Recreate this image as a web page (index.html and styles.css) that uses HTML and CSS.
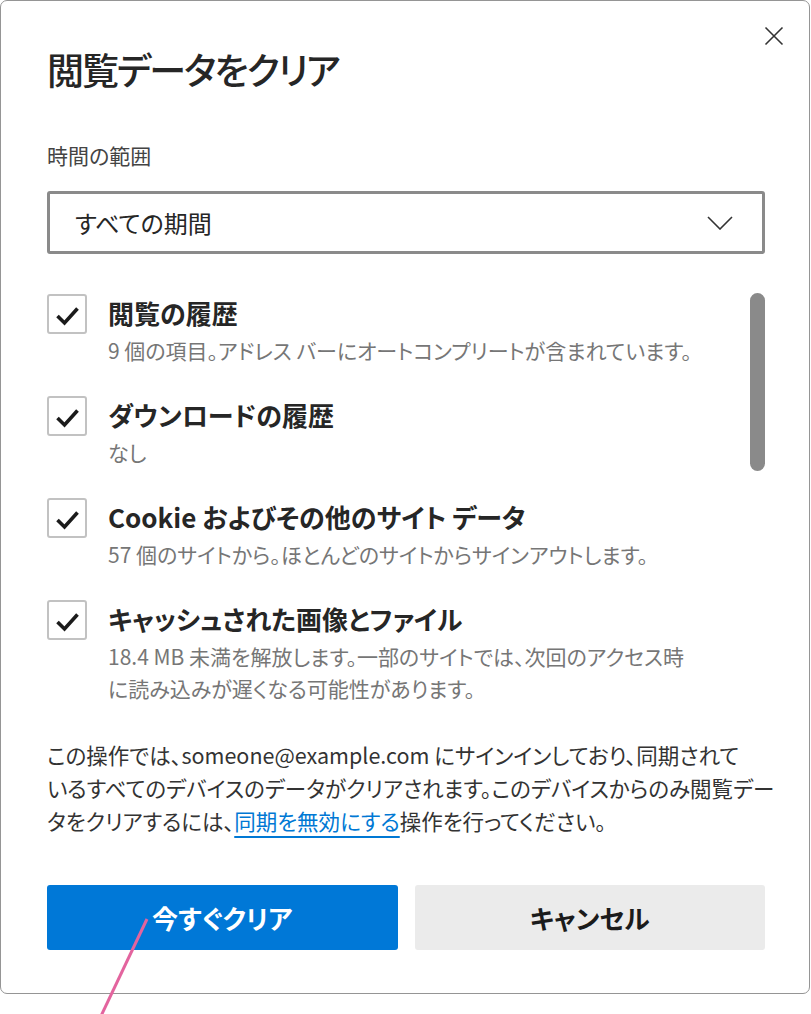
FILE: index.html
```html
<!DOCTYPE html>
<html lang="ja">
<head>
<meta charset="utf-8">
<title>閲覧データをクリア</title>
<link rel="stylesheet" href="styles.css">
</head>
<body>
<div class="dialog">
  <div class="header">
    <h1 class="title">閲覧データをクリア</h1>
    <button class="close" aria-label="閉じる">
      <svg viewBox="0 0 20 20" width="20" height="20"><path d="M1.5 1.5L18.5 18.5M18.5 1.5L1.5 18.5" fill="none" stroke="#333" stroke-width="1.6"/></svg>
    </button>
  </div>
  <div class="label">時間の範囲</div>
  <div class="select">
    <span>すべての期間</span>
    <svg class="chevron" viewBox="0 0 26 14" width="26" height="14"><path d="M1 1L13 13L25 1" fill="none" stroke="#333" stroke-width="1.6"/></svg>
  </div>
  <div class="list">
    <div class="items">
      <div class="item">
        <span class="check"><svg viewBox="0 0 36 36" width="36" height="36"><path d="M8.5 20L15.5 27L28.5 12.5" fill="none" stroke="#1b1b1b" stroke-width="3.6"/></svg></span>
        <div class="text">
          <div class="item-title">閲覧の履歴</div>
          <div class="item-sub">9 個の項目。アドレス バーにオートコンプリートが含まれています。</div>
        </div>
      </div>
      <div class="item">
        <span class="check"><svg viewBox="0 0 36 36" width="36" height="36"><path d="M8.5 20L15.5 27L28.5 12.5" fill="none" stroke="#1b1b1b" stroke-width="3.6"/></svg></span>
        <div class="text">
          <div class="item-title">ダウンロードの履歴</div>
          <div class="item-sub">なし</div>
        </div>
      </div>
      <div class="item">
        <span class="check"><svg viewBox="0 0 36 36" width="36" height="36"><path d="M8.5 20L15.5 27L28.5 12.5" fill="none" stroke="#1b1b1b" stroke-width="3.6"/></svg></span>
        <div class="text">
          <div class="item-title">Cookie およびその他のサイト データ</div>
          <div class="item-sub">57 個のサイトから。ほとんどのサイトからサインアウトします。</div>
        </div>
      </div>
      <div class="item">
        <span class="check"><svg viewBox="0 0 36 36" width="36" height="36"><path d="M8.5 20L15.5 27L28.5 12.5" fill="none" stroke="#1b1b1b" stroke-width="3.6"/></svg></span>
        <div class="text">
          <div class="item-title">キャッシュされた画像とファイル</div>
          <div class="item-sub">18.4 MB 未満を解放します。一部のサイトでは、次回のアクセス時<br>に読み込みが遅くなる可能性があります。</div>
        </div>
      </div>
    </div>
    <div class="track"><div class="thumb"></div></div>
  </div>
  <p class="notice">この操作では、someone@example.com にサインインしており、同期されて<br>いるすべてのデバイスのデータがクリアされます。このデバイスからのみ閲覧デー<br>タをクリアするには、<a class="link" href="#">同期を無効にする</a>操作を行ってください。</p>
  <div class="buttons">
    <button class="btn primary">今すぐクリア</button>
    <button class="btn secondary">キャンセル</button>
  </div>
</div>
<svg class="pointer" viewBox="0 0 811 1014" width="811" height="1014"><line x1="147" y1="919" x2="101" y2="1016" stroke="#e3649e" stroke-width="3"/></svg>
</body>
</html>
```

FILE: styles.css
```css
html, body {
  margin: 0;
  padding: 0;
  background: #ffffff;
}
body {
  width: 811px;
  height: 1014px;
  position: relative;
  overflow: hidden;
  font-family: "Noto Sans CJK JP", "Noto Sans", sans-serif;
  font-feature-settings: "palt";
  color: #2b2b2b;
}
.dialog {
  box-sizing: border-box;
  width: 810px;
  border: 1px solid #959595;
  border-radius: 7px;
  padding: 0 44px 43px 46px;
  background: #fff;
}
.header {
  display: flex;
  justify-content: space-between;
  align-items: flex-start;
}
.title {
  margin: 46px 0 0 0;
  font-size: 37px;
  line-height: 44px;
  font-weight: 500;
  color: #262626;
  letter-spacing: -2px;
}
.close {
  margin: 25px -19px 0 0;
  width: 20px;
  height: 20px;
  padding: 0;
  border: none;
  background: transparent;
  display: flex;
}
.label {
  margin-top: 50px;
  font-size: 21px;
  line-height: 28px;
  color: #444;
}
.select {
  box-sizing: border-box;
  margin-top: 22px;
  height: 63px;
  border: 3px solid #8a8a8a;
  border-radius: 3px;
  padding: 0 29px 0 25px;
  display: flex;
  align-items: center;
  justify-content: space-between;
  font-size: 24px;
  color: #262626;
}
.chevron {
  display: block;
}
.list {
  margin-top: 40px;
  display: flex;
}
.items {
  flex: 1;
  display: flex;
  flex-direction: column;
  gap: 30px;
}
.item {
  display: flex;
  align-items: flex-start;
}
.check {
  box-sizing: border-box;
  flex-shrink: 0;
  width: 40px;
  height: 40px;
  border: 2px solid #c2c2c2;
  border-radius: 3px;
  display: flex;
  align-items: center;
  justify-content: center;
}
.check svg {
  display: block;
}
.text {
  margin-left: 21px;
}
.item-title {
  font-size: 26px;
  line-height: 37px;
  font-weight: 600;
  color: #262626;
}
.item-sub {
  margin-top: 3px;
  font-size: 21px;
  line-height: 32px;
  color: #767676;
}
.track {
  width: 15px;
  flex-shrink: 0;
}
.thumb {
  margin-top: -1px;
  height: 178px;
  border-radius: 8px;
  background: #8a8a8a;
}
.notice {
  margin: 34px 0 0 0;
  font-size: 21.5px;
  line-height: 33px;
  color: #333;
  white-space: nowrap;
}
.link {
  color: #0078d4;
  text-decoration: underline;
  text-decoration-thickness: 2px;
  text-underline-offset: 6px;
}
.buttons {
  margin-top: 48px;
  display: flex;
  gap: 17px;
}
.btn {
  flex: 1;
  height: 65px;
  border: none;
  border-radius: 3px;
  font-family: inherit;
  font-feature-settings: "palt";
  font-size: 26px;
  font-weight: 700;
}
.primary {
  background: #0078d7;
  color: #ffffff;
}
.secondary {
  background: #ebebeb;
  color: #1b1b1b;
}
.pointer {
  position: absolute;
  left: 0;
  top: 0;
  pointer-events: none;
}
```
